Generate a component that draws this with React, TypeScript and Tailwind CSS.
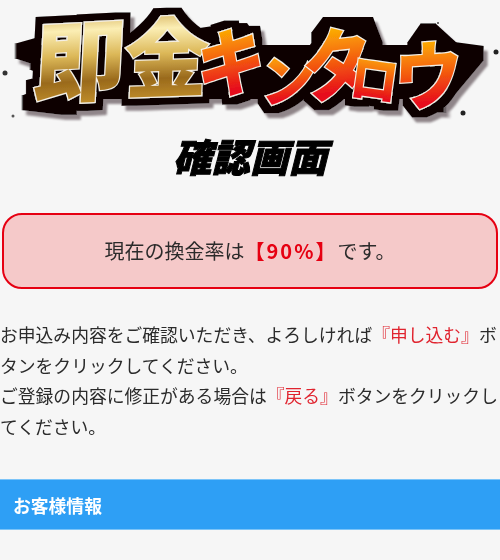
import React from 'react';

const JP = '"Noto Sans CJK JP", sans-serif';

type Glyph = { ch: string; cx: number; cy: number; size: number; sx: number; rot: number; skew: number; grad: string };

const glyphs: Glyph[] = [
  { ch: '即', cx: 80, cy: 56, size: 88, sx: 1.05, rot: -3, skew: -6, grad: 'url(#gold)' },
  { ch: '金', cx: 167, cy: 53, size: 86, sx: 0.98, rot: -2, skew: -4, grad: 'url(#gold)' },
  { ch: 'キ', cx: 231, cy: 58, size: 74, sx: 0.94, rot: -8, skew: -8, grad: 'url(#fire)' },
  { ch: 'ン', cx: 288, cy: 76, size: 56, sx: 0.98, rot: -6, skew: -6, grad: 'url(#fire)' },
  { ch: 'タ', cx: 337, cy: 60, size: 78, sx: 0.88, rot: -6, skew: -6, grad: 'url(#fire)' },
  { ch: 'ロ', cx: 375, cy: 76, size: 52, sx: 0.92, rot: 8, skew: 0, grad: 'url(#fire)' },
  { ch: 'ウ', cx: 428, cy: 71, size: 74, sx: 0.92, rot: -4, skew: -6, grad: 'url(#fire)' },
];

// torn brush ends of the black backdrop
const spikes = [
  '21,51 60,40 60,64',
  '36,62 60,56 60,74',
  '38,92 60,78 60,98',
  '28,103 64,88 70,108',
  '200,36 240,30 250,44',
  '318,40 330,24 366,24 376,50',
  '428,30 414,50 450,50',
  '477,53 440,48 446,90',
  '440,106 410,90 420,102',
];

function Logo() {
  return (
    <svg width="500" height="130" viewBox="0 0 500 130" className="block">
      <defs>
        <linearGradient id="gold" x1="0" y1="0" x2="0" y2="1">
          <stop offset="0.1" stopColor="#c79a3c" />
          <stop offset="0.3" stopColor="#fbeeb4" />
          <stop offset="0.5" stopColor="#dcb858" />
          <stop offset="0.7" stopColor="#9a6a1c" />
          <stop offset="0.92" stopColor="#c9962f" />
        </linearGradient>
        <linearGradient id="fire" x1="0" y1="0" x2="0" y2="1">
          <stop offset="0.12" stopColor="#ffc800" />
          <stop offset="0.5" stopColor="#f4600e" />
          <stop offset="0.8" stopColor="#e60b1c" />
        </linearGradient>
        <filter id="outline" filterUnits="userSpaceOnUse" x="0" y="0" width="500" height="130">
          <feMorphology in="SourceAlpha" operator="dilate" radius="7" result="fat" />
          <feFlood floodColor="#0a0606" />
          <feComposite in2="fat" operator="in" result="black" />
          <feOffset in="fat" dx="4" dy="5" result="moved" />
          <feGaussianBlur in="moved" stdDeviation="1" result="soft" />
          <feFlood floodColor="#8f8589" />
          <feComposite in2="soft" operator="in" result="shadow" />
          <feMerge>
            <feMergeNode in="shadow" />
            <feMergeNode in="black" />
            <feMergeNode in="SourceGraphic" />
          </feMerge>
        </filter>
      </defs>
      <g filter="url(#outline)">
        {spikes.map((p) => (
          <polygon key={p} points={p} fill="#0a0606" />
        ))}
        <rect x="60" y="52" width="370" height="40" fill="#0a0606" />
        {glyphs.map((g) => (
          <text
            key={g.ch}
            transform={`translate(${g.cx} ${g.cy}) rotate(${g.rot}) skewX(${g.skew}) scale(${g.sx} 1)`}
            textAnchor="middle"
            dominantBaseline="central"
            fontFamily={JP}
            fontWeight={900}
            fontSize={g.size}
            fill={g.grad}
            stroke="#f4efe6"
            strokeWidth={2.5}
            paintOrder="stroke"
          >
            {g.ch}
          </text>
        ))}
      </g>
      <circle cx="5" cy="73" r="2.5" fill="#333" />
      <circle cx="13" cy="116" r="1.5" fill="#555" />
      <circle cx="496" cy="52" r="2.5" fill="#222" />
      <circle cx="463" cy="113" r="2.5" fill="#222" />
      <circle cx="438" cy="23" r="1" fill="#444" />
    </svg>
  );
}

export default function App() {
  return (
    <div
      className="w-[500px] h-[560px] overflow-hidden bg-[#f6f6f6] text-[#2b2b2b] text-[17.8px] leading-[30.6px]"
      style={{ fontFamily: JP }}
    >
      <Logo />
      <h1 className="mt-[2px] text-center text-[38.5px] leading-[46px] font-black italic text-black [-webkit-text-stroke:1px_black]">
        確認画面
      </h1>
      <div className="mt-[35px] mx-[2px] h-[76px] flex items-center justify-center rounded-[20px] border-2 border-[#e60012] bg-[#f5c9c9]">
        <p className="text-[20px]">
          現在の換金率は<span className="font-bold text-[#e60012] tracking-[2px]">【90%】</span>です。
        </p>
      </div>
      <p className="mt-[30px]">
        お申込み内容をご確認いただき、よろしければ<span className="text-[#e0242f]">『申し込む』</span>ボタンをクリックしてください。
        <br />
        ご登録の内容に修正がある場合は<span className="text-[#e0242f]">『戻る』</span>ボタンをクリックしてください。
      </p>
      <div className="mt-[38px] h-[51px] flex items-center pl-[13px] bg-[#2e9ff5] border-y border-[#7cc4f8] text-white font-bold">
        お客様情報
      </div>
    </div>
  );
}
